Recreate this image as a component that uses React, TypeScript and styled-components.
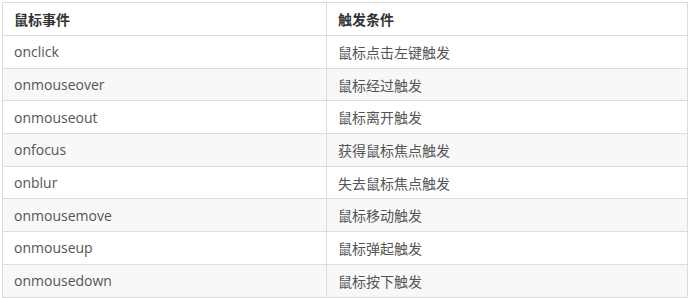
import { createGlobalStyle } from 'styled-components'
import styled from 'styled-components'

const GlobalStyle = createGlobalStyle`
  html, body {
    margin: 0;
    padding: 0;
    background: #fff;
  }
  body {
    font-family: "Open Sans", "Noto Sans CJK SC", sans-serif;
  }
`

const Page = styled.div`
  padding: 2px 3px 0 2px;
`

const Table = styled.table`
  width: 686px;
  border-collapse: collapse;
  border: 1px solid #dcdcdc;
  font-size: 14px;
  color: #555;
`

const HeadRow = styled.tr`
  height: 33px;
`

const HeadCell = styled.th<{ $first?: boolean }>`
  text-align: left;
  font-weight: bold;
  color: #333;
  padding: 0 11px;
  border: 1px solid #dcdcdc;
  width: ${({ $first }) => ($first ? '301px' : 'auto')};
`

const Row = styled.tr<{ $striped: boolean }>`
  height: 32.7px;
  background: ${({ $striped }) => ($striped ? '#f8f8f8' : '#fff')};
`

const Cell = styled.td`
  padding: 0 11px;
  border: 1px solid #dcdcdc;
`

const events = [
  ['onclick', '鼠标点击左键触发'],
  ['onmouseover', '鼠标经过触发'],
  ['onmouseout', '鼠标离开触发'],
  ['onfocus', '获得鼠标焦点触发'],
  ['onblur', '失去鼠标焦点触发'],
  ['onmousemove', '鼠标移动触发'],
  ['onmouseup', '鼠标弹起触发'],
  ['onmousedown', '鼠标按下触发'],
]

export default function App() {
  return (
    <Page>
      <GlobalStyle />
      <Table>
        <thead>
          <HeadRow>
            <HeadCell $first>鼠标事件</HeadCell>
            <HeadCell>触发条件</HeadCell>
          </HeadRow>
        </thead>
        <tbody>
          {events.map(([name, desc], i) => (
            <Row key={name} $striped={i % 2 === 1}>
              <Cell>{name}</Cell>
              <Cell>{desc}</Cell>
            </Row>
          ))}
        </tbody>
      </Table>
    </Page>
  )
}
